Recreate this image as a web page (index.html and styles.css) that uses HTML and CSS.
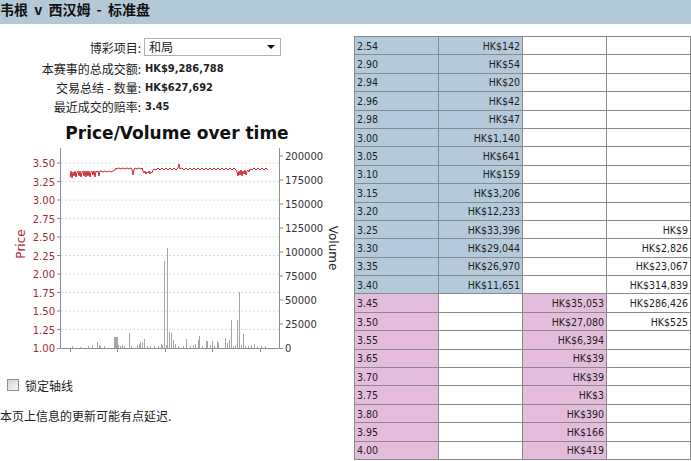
FILE: index.html
```html
<html>

<head>
    <meta http-equiv="Content-Type" content="text/html; charset=utf-8">
    <title>韦根 v 西汉姆 - 标准盘</title>
    <link rel="stylesheet" href="styles.css">
</head>

<body>
    <div class="header">韦根 v 西汉姆 - 标准盘</div>

    <div class="content">
        <div class="left">
            <div class="form">
                <div class="row first">
                    <span class="label">博彩项目:</span>
                    <div class="select">和局<span class="arrow"></span></div>
                </div>
                <div class="row">
                    <span class="label">本赛事的总成交额:</span>
                    <span class="value">HK$9,286,788</span>
                </div>
                <div class="row">
                    <span class="label">交易总结 - 数量:</span>
                    <span class="value">HK$627,692</span>
                </div>
                <div class="row">
                    <span class="label">最近成交的赔率:</span>
                    <span class="value">3.45</span>
                </div>
            </div>

            <svg class="chart" width="354" height="250" viewBox="0 116 354 250">
                <text class="chart-title" x="177" y="139" text-anchor="middle">Price/Volume over time</text>

                <!-- grid -->
                <g class="grid">
                    <line x1="61" y1="329.5" x2="279" y2="329.5" />
                    <line x1="61" y1="311" x2="279" y2="311" />
                    <line x1="61" y1="292.5" x2="279" y2="292.5" />
                    <line x1="61" y1="274" x2="279" y2="274" />
                    <line x1="61" y1="255.5" x2="279" y2="255.5" />
                    <line x1="61" y1="237" x2="279" y2="237" />
                    <line x1="61" y1="218.5" x2="279" y2="218.5" />
                    <line x1="61" y1="200" x2="279" y2="200" />
                    <line x1="61" y1="181.5" x2="279" y2="181.5" />
                    <line x1="61" y1="163" x2="279" y2="163" />
                </g>

                <!-- axes -->
                <path class="axis" d="M60.5 148V348.5H279.5V148
                    M57 348.5H60 M57 329.5H60 M57 311H60 M57 292.5H60 M57 274H60 M57 255.5H60
                    M57 237H60 M57 218.5H60 M57 200H60 M57 181.5H60 M57 163H60
                    M280 348.5H283 M280 324H283 M280 300H283 M280 276H283 M280 252H283
                    M280 228H283 M280 204H283 M280 180H283 M280 156H283
                    M70.5 349V352 M117.5 349V352 M165.5 349V352 M212.5 349V352 M260.5 349V352" />

                <g class="price-ticks" text-anchor="end">
                    <text x="55" y="352">1.00</text>
                    <text x="55" y="333.5">1.25</text>
                    <text x="55" y="315">1.50</text>
                    <text x="55" y="296.5">1.75</text>
                    <text x="55" y="278">2.00</text>
                    <text x="55" y="259.5">2.25</text>
                    <text x="55" y="241">2.50</text>
                    <text x="55" y="222.5">2.75</text>
                    <text x="55" y="204">3.00</text>
                    <text x="55" y="185.5">3.25</text>
                    <text x="55" y="167">3.50</text>
                </g>

                <g class="volume-ticks">
                    <text x="285" y="352">0</text>
                    <text x="285" y="328">25000</text>
                    <text x="285" y="304">50000</text>
                    <text x="285" y="280">75000</text>
                    <text x="285" y="256">100000</text>
                    <text x="285" y="232">125000</text>
                    <text x="285" y="208">150000</text>
                    <text x="285" y="184">175000</text>
                    <text x="285" y="160">200000</text>
                </g>

                <text class="price-label" x="0" y="0" text-anchor="middle" transform="translate(25 244) rotate(-90)">Price</text>
                <text class="volume-label" x="0" y="0" text-anchor="middle" transform="translate(329 248) rotate(90)">Volume</text>

                <!-- volume bars -->
                <path class="bars" d="M72.5 348V346 M80.5 348V347 M88.5 348V346 M92.5 348V345 M97.5 348V342 M99.5 348V345
                    M100.5 348V346 M104.5 348V346 M114.5 348V337 M115.5 348V337 M116.5 348V337 M117.5 348V337
                    M118.5 348V345 M120.5 348V346 M122.5 348V345 M124.5 348V346 M129.5 348V333 M131.5 348V346
                    M137.5 348V345 M139.5 348V344 M140.5 348V342 M142.5 348V343 M144.5 348V339 M147.5 348V346
                    M150.5 348V346 M154.5 348V346 M158.5 348V346 M161.5 348V344 M162.5 348V345 M164.5 348V261
                    M166.5 348V345 M167.5 348V248 M169.5 348V332 M171.5 348V333 M173.5 348V340 M175.5 348V344
                    M178.5 348V346 M183.5 348V346 M186.5 348V339 M190.5 348V346 M193.5 348V345 M195.5 348V344
                    M198.5 348V340 M199.5 348V336 M202.5 348V346 M206.5 348V341 M207.5 348V341 M210.5 348V345
                    M212.5 348V341 M214.5 348V346 M217.5 348V341 M218.5 348V343 M225.5 348V338 M227.5 348V343
                    M229.5 348V340 M231.5 348V320 M233.5 348V346 M235.5 348V345 M237.5 348V320 M239.5 348V292
                    M241.5 348V345 M243.5 348V334 M245.5 348V346 M248.5 348V346 M251.5 348V345 M254.5 348V344
                    M257.5 348V346 M261.5 348V346 M265.5 348V346" />

                <!-- price line -->
                <polyline class="price-line" points="70,177 71,171 72,178 73,172 74,176 75,171 76,177 77,172 78,171 79,176
                    80,171 81,177 82,172 83,171 84,176 85,171 86,177 87,171 88,176 89,171 90,177 91,172 92,171 93,175
                    94,171 95,177 96,171 97,172 98,171 99,176 100,171 101,171 103,172 105,171 107,172 109,171 111,172
                    113,171 115,170 116,168 117,169 119,168 121,169 123,168 125,169 127,168 129,169 131,168 132,169
                    133,175 134,170 135,168 137,169 139,168 141,169 142,168 143,171 144,173 145,171 146,174 147,172
                    148,173 149,171 150,174 151,172 152,173 153,170 154,169 156,170 158,168 160,170 162,168 164,170
                    166,168 168,170 170,168 172,170 174,168 176,170 178,168 179,164 180,169 182,168 184,170 186,168
                    188,170 190,168 192,170 194,168 196,170 198,168 200,170 202,168 204,170 206,168 208,170 210,168
                    212,170 214,168 216,170 218,168 220,170 222,168 224,170 226,168 228,170 230,168 232,170 234,168
                    236,170 237,172 238,176 239,171 240,175 241,170 242,176 243,171 244,174 245,170 246,175 247,171
                    248,170 249,172 250,169 252,170 254,168 256,170 258,168 260,170 262,168 264,170 266,168 268,170" />
            </svg>

            <label class="lock"><span class="checkbox"></span>锁定轴线</label>
            <p class="note">本页上信息的更新可能有点延迟.</p>
        </div>

        <table class="ladder">
            <tr class="back"><td>2.54</td><td>HK$142</td><td></td><td></td></tr>
            <tr class="back"><td>2.90</td><td>HK$54</td><td></td><td></td></tr>
            <tr class="back"><td>2.94</td><td>HK$20</td><td></td><td></td></tr>
            <tr class="back"><td>2.96</td><td>HK$42</td><td></td><td></td></tr>
            <tr class="back"><td>2.98</td><td>HK$47</td><td></td><td></td></tr>
            <tr class="back"><td>3.00</td><td>HK$1,140</td><td></td><td></td></tr>
            <tr class="back"><td>3.05</td><td>HK$641</td><td></td><td></td></tr>
            <tr class="back"><td>3.10</td><td>HK$159</td><td></td><td></td></tr>
            <tr class="back"><td>3.15</td><td>HK$3,206</td><td></td><td></td></tr>
            <tr class="back"><td>3.20</td><td>HK$12,233</td><td></td><td></td></tr>
            <tr class="back"><td>3.25</td><td>HK$33,396</td><td></td><td>HK$9</td></tr>
            <tr class="back"><td>3.30</td><td>HK$29,044</td><td></td><td>HK$2,826</td></tr>
            <tr class="back"><td>3.35</td><td>HK$26,970</td><td></td><td>HK$23,067</td></tr>
            <tr class="back"><td>3.40</td><td>HK$11,651</td><td></td><td>HK$314,839</td></tr>
            <tr class="lay"><td>3.45</td><td></td><td>HK$35,053</td><td>HK$286,426</td></tr>
            <tr class="lay"><td>3.50</td><td></td><td>HK$27,080</td><td>HK$525</td></tr>
            <tr class="lay"><td>3.55</td><td></td><td>HK$6,394</td><td></td></tr>
            <tr class="lay"><td>3.65</td><td></td><td>HK$39</td><td></td></tr>
            <tr class="lay"><td>3.70</td><td></td><td>HK$39</td><td></td></tr>
            <tr class="lay"><td>3.75</td><td></td><td>HK$3</td><td></td></tr>
            <tr class="lay"><td>3.80</td><td></td><td>HK$390</td><td></td></tr>
            <tr class="lay"><td>3.95</td><td></td><td>HK$166</td><td></td></tr>
            <tr class="lay"><td>4.00</td><td></td><td>HK$419</td><td></td></tr>
        </table>
    </div>
</body>

</html>
```

FILE: styles.css
```css
body {
    margin: 0;
    font-family: "DejaVu Sans Condensed", "DejaVu Sans", "Noto Sans CJK SC", sans-serif;
    font-size: 11px;
    color: #222;
    background: white;
}

.header {
    height: 24px;
    background: #b3c9d8;
    font: bold 14px "Noto Sans CJK SC", sans-serif;
    line-height: 18px;
    word-spacing: 3px;
    color: #111;
}

.content {
    display: flex;
    align-items: flex-start;
}

.left {
    width: 354px;
    flex: none;
}

.form {
    padding-top: 14px;
}

.row {
    display: flex;
    align-items: center;
    height: 19px;
}

.row.first {
    height: 18px;
    margin-bottom: 3px;
}

.label {
    width: 141px;
    text-align: right;
    font-family: "Noto Sans CJK SC", sans-serif;
    font-size: 12px;
    color: #222;
}

.value {
    margin-left: 4px;
    font-weight: bold;
    font-size: 11px;
}

.select {
    position: relative;
    width: 131px;
    height: 16px;
    margin-left: 3px;
    padding-left: 4px;
    border: 1px solid #aab0b8;
    font-family: "Noto Sans CJK SC", sans-serif;
    font-size: 12px;
    line-height: 16px;
    background: white;
}

.arrow {
    position: absolute;
    right: 5px;
    top: 6px;
    border-left: 4px solid transparent;
    border-right: 4px solid transparent;
    border-top: 4px solid #111;
}

.chart {
    display: block;
}

.chart-title {
    font-family: "DejaVu Sans", sans-serif;
    font-weight: bold;
    font-size: 17px;
    fill: #111;
}

.grid line {
    stroke: #dcdcdc;
    stroke-width: 1;
    stroke-dasharray: 2 2;
}

.axis {
    fill: none;
    stroke: #8c8c8c;
    stroke-width: 1;
}

.price-ticks text {
    font-family: "DejaVu Sans", sans-serif;
    font-size: 10px;
    fill: #9e2b36;
}

.volume-ticks text {
    font-family: "DejaVu Sans", sans-serif;
    font-size: 10px;
    fill: #333;
}

.price-label {
    font-family: "DejaVu Sans", sans-serif;
    font-size: 12px;
    fill: #b8232f;
}

.volume-label {
    font-family: "DejaVu Sans", sans-serif;
    font-size: 12px;
    fill: #222;
}

.bars {
    fill: none;
    stroke: #a6a6a6;
    stroke-width: 1;
}

.price-line {
    fill: none;
    stroke: #cc2630;
    stroke-width: 1;
}

.lock {
    display: flex;
    align-items: center;
    gap: 6px;
    height: 12px;
    margin-top: 13px;
    padding-left: 7px;
    font-family: "Noto Sans CJK SC", sans-serif;
    font-size: 12px;
}

.checkbox {
    width: 10px;
    height: 10px;
    border: 1px solid #8f8f8f;
    background: linear-gradient(135deg, #d4d4d4, #f7f7f7);
}

.note {
    margin: 17px 0 0;
    font-family: "Noto Sans CJK SC", sans-serif;
    font-size: 12px;
    line-height: 16px;
}

.ladder {
    margin-top: 12px;
    width: 337px;
    flex: none;
    border-collapse: collapse;
    table-layout: fixed;
    font-size: 10.5px;
    color: #1e1e1e;
}

.ladder td {
    height: 18.4px;
    padding: 0 2px;
    border: 1px solid #8a8a8a;
    text-align: right;
    white-space: nowrap;
    line-height: 14px;
}

.ladder td:first-child {
    text-align: left;
}

.back td:nth-child(1),
.back td:nth-child(2) {
    background: #b4c9d9;
}

.lay td:nth-child(1),
.lay td:nth-child(3) {
    background: #e3bddb;
}
```
